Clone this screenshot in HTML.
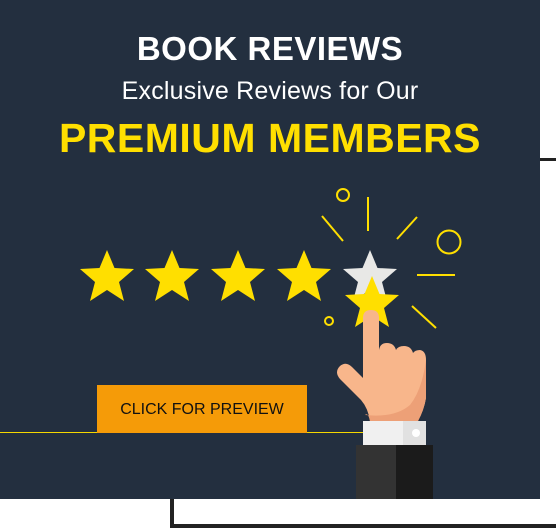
<!DOCTYPE html>
<html><head><style>
body{margin:0;width:556px;height:529px;background:#fff;position:relative;overflow:hidden;font-family:"Liberation Sans",sans-serif}
.p{position:absolute;left:0;top:0;width:540px;height:499px;background:#232f3f}
.t{position:absolute;left:0;width:540px;text-align:center;white-space:nowrap}
</style></head><body>
<div style="position:absolute;left:540px;top:158px;width:16px;height:3px;background:#222"></div>
<div style="position:absolute;left:170px;top:499px;width:4px;height:29px;background:#222"></div>
<div style="position:absolute;left:170px;top:524px;width:386px;height:4px;background:#222"></div>
<div class="p"></div>
<div class="t" style="top:30px;font-size:33px;font-weight:bold;color:#fff;letter-spacing:0.5px">BOOK REVIEWS</div>
<div class="t" style="top:77px;font-size:25px;color:#fff;letter-spacing:0.2px">Exclusive Reviews for Our</div>
<div class="t" style="top:115px;font-size:41px;font-weight:bold;color:#ffdf00;letter-spacing:0.5px">PREMIUM MEMBERS</div>
<div style="position:absolute;left:0;top:432px;width:363px;height:1px;background:#f5d800"></div>
<div style="position:absolute;left:97px;top:385px;width:210px;height:48px;background:#f59b08;color:#111;font-size:16px;line-height:50px;text-align:center">CLICK FOR PREVIEW</div>
<svg width="556" height="529" style="position:absolute;left:0;top:0">
<defs><polygon id="s" points="0,-28 7.5,-10 27,-9 12,4 17,23 0,12 -17,23 -12,4 -27,-9 -7.5,-10"/></defs>
<use href="#s" x="107" y="278" fill="#ffdf00"/>
<use href="#s" x="172" y="278" fill="#ffdf00"/>
<use href="#s" x="238" y="278" fill="#ffdf00"/>
<use href="#s" x="304" y="278" fill="#ffdf00"/>
<use href="#s" x="370" y="278" fill="#e8e8e6"/>
<use href="#s" x="372" y="304" fill="#ffdf00"/>
<g stroke="#ffdf00" stroke-width="2" fill="none">
<circle cx="343" cy="195" r="6"/><circle cx="449" cy="242" r="11.5"/><circle cx="329" cy="321" r="4"/>
<line x1="368" y1="197" x2="368" y2="231"/><line x1="322" y1="216" x2="343" y2="241"/>
<line x1="417" y1="217" x2="397" y2="239"/><line x1="417" y1="275" x2="455" y2="275"/>
<line x1="412" y1="306" x2="436" y2="328"/></g>
<path d="M363,318 Q363,310 371,310 Q379,310 379,318 L379,350 Q380,343 387,343 Q394,343 396,350 Q398,346 404,346 Q411,346 413,353 Q415,350 420,350 Q426,351 426,360 L426,398 Q424,410 418,421 L370,421 Q368,408 361,400 L340,379 Q334,372 340,366 Q346,361 352,367 L363,378 Z" fill="#f8b68b"/>
<path d="M426,360 L426,398 Q424,410 418,421 L370,421 Q368,412 365,415 Q395,418 410,405 Q422,390 426,360Z" fill="#eda077"/>
<rect x="363" y="421" width="63" height="24" fill="#f0f0f0"/>
<rect x="403" y="421" width="23" height="24" fill="#e1e1e1"/>
<circle cx="416" cy="433" r="4" fill="#fff"/>
<rect x="356" y="445" width="40" height="54" fill="#333"/>
<rect x="396" y="445" width="37" height="54" fill="#1b1b1b"/>
</svg>
</body></html>
